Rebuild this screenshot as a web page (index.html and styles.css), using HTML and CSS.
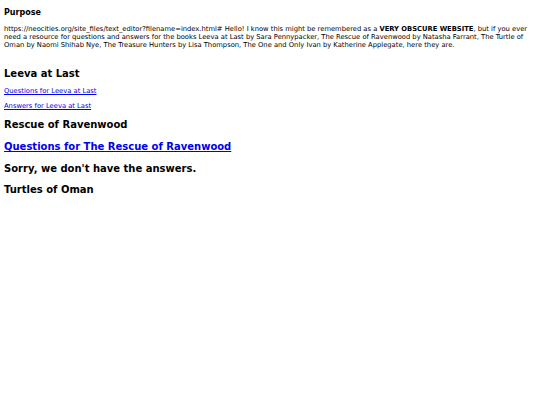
FILE: index.html
```html
<!DOCTYPE html>
<html>
<head>
<meta charset="utf-8">
<title>Book Answers</title>
<link rel="stylesheet" href="styles.css">
</head>
<body>
<main class="page">
  <h4 class="purpose">Purpose</h4>
  <p class="intro">https://neocities.org/site_files/text_editor?filename=index.html# Hello! I know this might be remembered as a <b>VERY OBSCURE WEBSITE</b>, but if you ever need a resource for questions and answers for the books Leeva at Last by Sara Pennypacker, The Rescue of Ravenwood by Natasha Farrant, The Turtle of Oman by Naomi Shihab Nye, The Treasure Hunters by Lisa Thompson, The One and Only Ivan by Katherine Applegate, here they are.</p>
  <h2 class="book book-leeva">Leeva at Last</h2>
  <p class="small-link first"><a href="#">Questions for Leeva at Last</a></p>
  <p class="small-link second"><a href="#">Answers for Leeva at Last</a></p>
  <h2 class="book book-rescue">Rescue of Ravenwood</h2>
  <h2 class="book big-link"><a href="#">Questions for The Rescue of Ravenwood</a></h2>
  <h2 class="book sorry">Sorry, we don't have the answers.</h2>
  <h2 class="book turtles">Turtles of Oman</h2>
</main>
</body>
</html>
```
FILE: styles.css
```css
html, body {
  margin: 0;
  padding: 0;
  background: #ffffff;
}
.page {
  padding: 0 4px;
  font-family: "DejaVu Sans", Verdana, sans-serif;
  color: #000000;
}
.purpose {
  margin: 8px 0 0;
  font-size: 8px;
  line-height: 10px;
  font-weight: bold;
}
.intro {
  margin: 7px 0 0;
  font-size: 6.75px;
  line-height: 8px;
}
.book {
  margin: 0;
  font-size: 10px;
  line-height: 12px;
  font-weight: bold;
}
.book-leeva { margin-top: 19px; }
.small-link {
  margin: 0;
  font-size: 6.75px;
  line-height: 8px;
}
.small-link.first { margin-top: 7px; }
.small-link.second { margin-top: 7px; }
.book-rescue { margin-top: 9px; }
.big-link { margin-top: 10px; }
.sorry { margin-top: 10px; }
.turtles { margin-top: 9px; }
a { color: #0000ee; }
```
